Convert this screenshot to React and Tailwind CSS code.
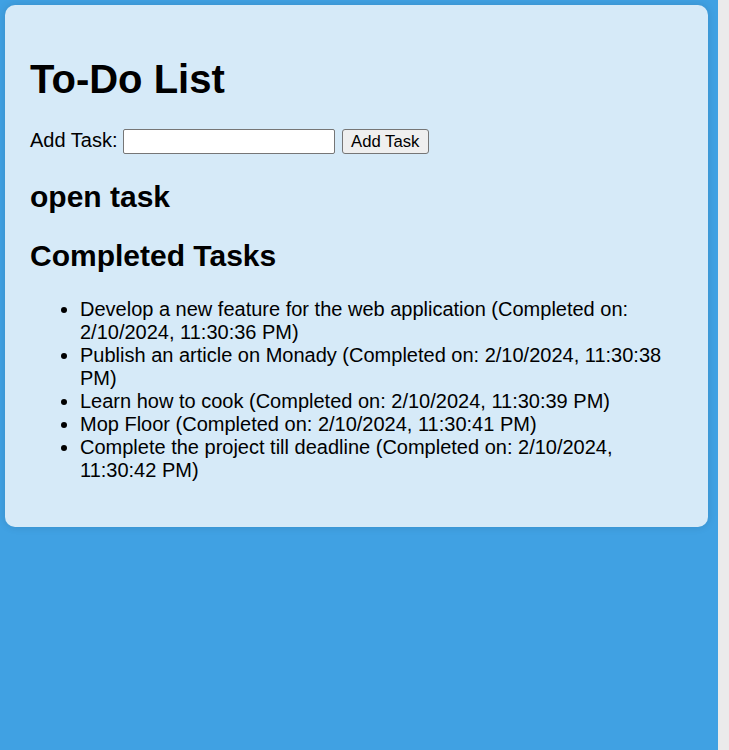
export default function App() {
  const done = [
    "Develop a new feature for the web application (Completed on: 2/10/2024, 11:30:36 PM)",
    "Publish an article on Monady (Completed on: 2/10/2024, 11:30:38 PM)",
    "Learn how to cook (Completed on: 2/10/2024, 11:30:39 PM)",
    "Mop Floor (Completed on: 2/10/2024, 11:30:41 PM)",
    "Complete the project till deadline (Completed on: 2/10/2024, 11:30:42 PM)",
  ];
  return (
    <div className="flex w-[729px] h-[750px] overflow-hidden text-black" style={{ fontFamily: '"Liberation Sans", Arial, sans-serif' }}>
      <div className="w-[718px] h-full bg-[#40a1e3] pt-[5px] pl-[5px] pr-[10px]">
        <div className="rounded-[10px] bg-[#d6eaf8] px-[25px] pt-[25px] pb-[45px] shadow-[0_0_8px_rgba(0,0,0,0.12)]">
          <h1 className="mt-[26px] text-[40px] leading-[46px] font-bold">To-Do List</h1>
          <div className="mt-[27px] flex items-start h-[26px]">
            <label className="w-[92.7px] text-[20px] leading-[23px] whitespace-nowrap">Add Task:</label>
            <input type="text" className="h-[25px] w-[212px] border border-[#767676] rounded-[2px] bg-white px-[2px] text-[16.7px] outline-none" />
            <button className="ml-[7px] h-[25px] w-[87px] border border-[#767676] rounded-[3px] bg-[#efefef] text-[16.7px] leading-[20px]">
              Add Task
            </button>
          </div>
          <h2 className="mt-[25.4px] text-[30px] leading-[34.5px] font-bold">open task</h2>
          <h2 className="mt-[24.5px] text-[30px] leading-[34.5px] font-bold">Completed Tasks</h2>
          <ul className="mt-[23.9px] list-disc pl-[50px] text-[20px] leading-[23px]">
            {done.map((t) => (
              <li key={t}>{t}</li>
            ))}
          </ul>
        </div>
      </div>
      <div className="w-[11px] h-full bg-[#ebebeb]" />
    </div>
  );
}
